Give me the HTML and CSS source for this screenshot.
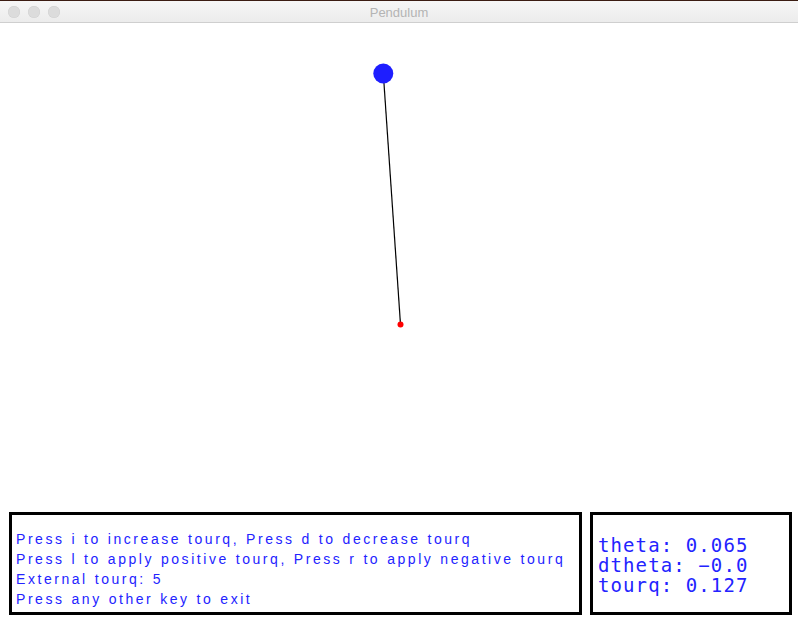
FILE: index.html
```html
<!DOCTYPE html>
<html>
<head>
<meta charset="utf-8">
<title>Pendulum</title>
<link rel="stylesheet" href="styles.css">
</head>
<body>
<div class="window">
  <div class="titlebar">
    <div class="lights">
      <span class="light"></span>
      <span class="light"></span>
      <span class="light"></span>
    </div>
    <div class="title">Pendulum</div>
  </div>
  <div class="content">
    <svg class="canvas" width="798" height="489" viewBox="0 22 798 489">
      <line x1="383.3" y1="72.5" x2="400.5" y2="323.5" stroke="#000" stroke-width="1.2"/>
      <circle cx="383.3" cy="72.5" r="10" fill="#1e1eff"/>
      <circle cx="400.5" cy="323.5" r="3" fill="#ff0000"/>
    </svg>
    <div class="panels">
      <div class="panel help">
        <div class="line">Press i to increase tourq, Press d to decrease tourq</div>
        <div class="line">Press l to apply positive tourq, Press r to apply negative tourq</div>
        <div class="line">External tourq: 5</div>
        <div class="line">Press any other key to exit</div>
      </div>
      <div class="panel stats">
        <div class="sline">theta: 0.065</div>
        <div class="sline">dtheta: −0.0</div>
        <div class="sline">tourq: 0.127</div>
      </div>
    </div>
  </div>
</div>
</body>
</html>
```
FILE: styles.css
```css
html, body {
  margin: 0;
  padding: 0;
  background: #ffffff;
}
.window {
  width: 798px;
  height: 623px;
  display: flex;
  flex-direction: column;
  overflow: hidden;
}
.titlebar {
  height: 21px;
  border-top: 1px solid #3b1c12;
  border-bottom: 1px solid #cfcfcf;
  background: linear-gradient(#f6f6f6, #ececec);
  position: relative;
  display: flex;
  align-items: center;
  justify-content: center;
  flex-shrink: 0;
}
.lights {
  position: absolute;
  left: 8px;
  top: 5px;
  display: flex;
  gap: 8px;
}
.light {
  width: 12px;
  height: 12px;
  border-radius: 50%;
  background: #dcdcdc;
  box-shadow: inset 0 0 0 0.5px #d0d0d0;
}
.title {
  font-family: "Liberation Sans", Arial, sans-serif;
  font-size: 13px;
  color: #b4b4b4;
  margin-top: 1px;
}
.content {
  flex: 1;
  display: flex;
  flex-direction: column;
}
.canvas {
  display: block;
  flex-shrink: 0;
}
.panels {
  display: flex;
  gap: 8px;
  padding-left: 9px;
}
.panel {
  border: 3px solid #000;
  box-sizing: content-box;
  color: #2323ff;
}
.help {
  width: 563px;
  padding: 14px 0 0 4px;
  height: 83px;
  font-family: "Liberation Sans", Arial, sans-serif;
}
.line {
  font-size: 14px;
  letter-spacing: 2.55px;
  word-spacing: 0.5px;
  line-height: 20px;
  white-space: nowrap;
}
.stats {
  width: 191px;
  padding: 20px 0 0 5px;
  height: 77px;
  font-family: "DejaVu Sans Mono", monospace;
}
.sline {
  font-size: 19px;
  letter-spacing: 1.1px;
  line-height: 20px;
  white-space: nowrap;
}
```
